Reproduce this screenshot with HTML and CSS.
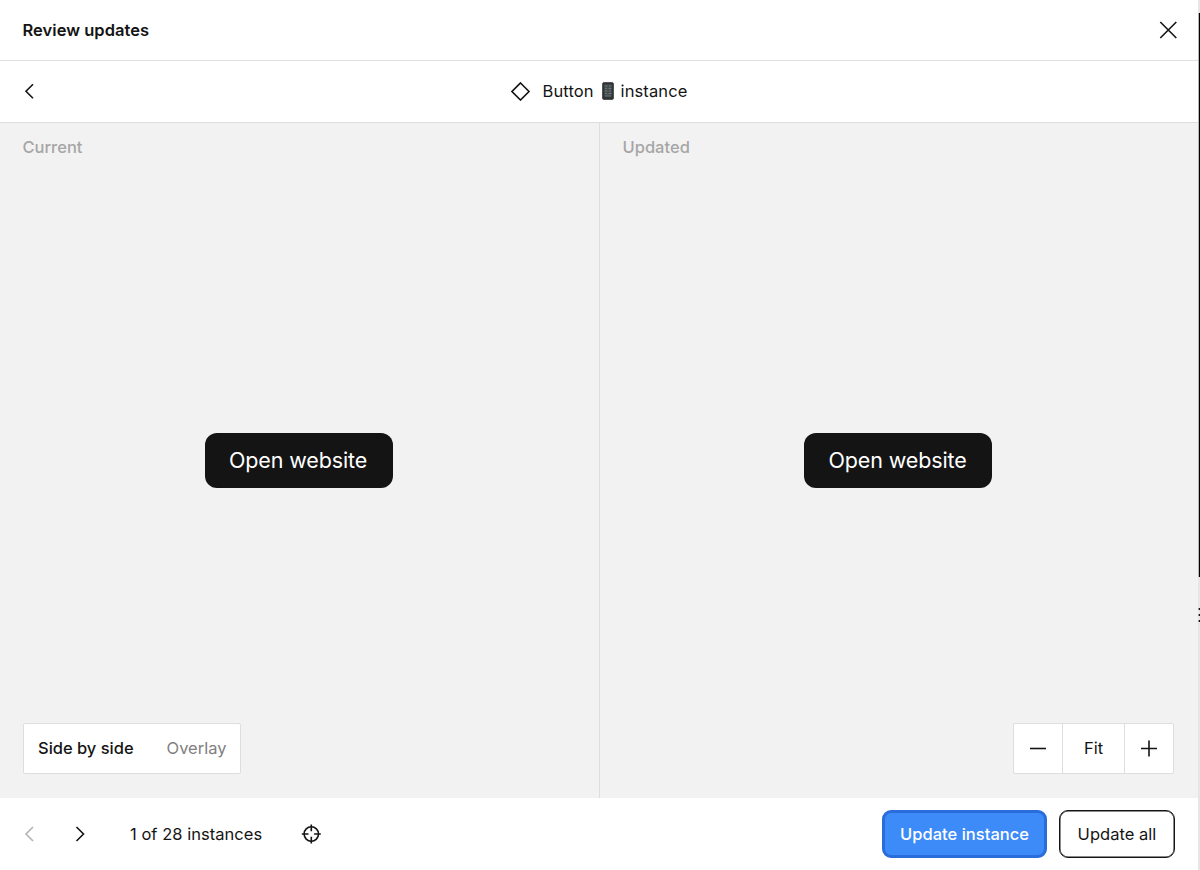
FILE: index.html
```
<!DOCTYPE html>
<html lang="en">
<head>
    <meta charset="UTF-8">
    <meta name="viewport" content="width=device-width, initial-scale=1.0">
    <title>Review updates</title>
    <link rel="stylesheet" href="styles.css">
</head>
<body>
    <div class="dialog">
        <header class="title-bar">
            <h1>Review updates</h1>
            <button class="icon-button" aria-label="Close">
                <svg width="18" height="18" viewBox="0 0 18 18"><path d="M1.3 1l16 16M17.3 1l-16 16"/></svg>
            </button>
        </header>

        <div class="sub-bar">
            <button class="icon-button back" aria-label="Back">
                <svg width="10" height="16" viewBox="0 0 10 16"><path d="M9 1.3l-7 7 7 7"/></svg>
            </button>
            <div class="instance-name">
                <svg class="diamond" width="20" height="20" viewBox="0 0 20 20"><path d="M9.5 2l8.5 8.5L9.5 19 1 10.5z"/></svg>
                <span>Button</span>
                <svg class="phone" width="12" height="18" viewBox="0 0 12 18">
                    <rect x="0.5" y="0.5" width="11" height="17" rx="1.5" fill="#303536"/>
                    <rect x="2" y="2" width="8" height="13" fill="#454c4d"/>
                    <path d="M2.5 4h3M7 4h2.5M3 6.5h2M6.5 6.5h3M2.5 9h3M7 9h2M3 11.5h2M6.5 11.5h3M3 14h6"/>
                </svg>
                <span>instance</span>
            </div>
        </div>

        <main class="compare">
            <section class="pane">
                <h2>Current</h2>
                <div class="preview">Open website</div>
                <div class="view-toggle">
                    <button class="active">Side by side</button>
                    <button>Overlay</button>
                </div>
            </section>
            <section class="pane">
                <h2>Updated</h2>
                <div class="preview">Open website</div>
                <div class="zoom">
                    <button aria-label="Zoom out">
                        <svg width="18" height="18" viewBox="0 0 18 18"><path d="M1 8.5h16"/></svg>
                    </button>
                    <button class="fit">Fit</button>
                    <button aria-label="Zoom in">
                        <svg width="18" height="18" viewBox="0 0 18 18"><path d="M1 8.5h16M9 .5v16"/></svg>
                    </button>
                </div>
            </section>
        </main>

        <footer class="footer">
            <button class="icon-button prev" aria-label="Previous">
                <svg width="10" height="16" viewBox="0 0 10 16"><path d="M9 1L2 8l7 7"/></svg>
            </button>
            <button class="icon-button next" aria-label="Next">
                <svg width="10" height="16" viewBox="0 0 10 16"><path d="M1.5 1l7 7-7 7"/></svg>
            </button>
            <span class="counter">1 of 28 instances</span>
            <button class="icon-button locate" aria-label="Locate">
                <svg width="20" height="20" viewBox="0 0 20 20"><circle cx="10.3" cy="10" r="7.2"/><path d="M10.3 .5v6.7M10.3 12.8v6.7M.8 10h6.7M13.1 10h6.7"/></svg>
            </button>
            <div class="actions">
                <button class="btn btn-primary">Update instance</button>
                <button class="btn btn-outline">Update all</button>
            </div>
        </footer>
    </div>

    <!-- edge of the canvas behind the dialog -->
    <div class="backdrop">
        <div class="canvas"></div>
        <div class="dots"><i></i><i></i><i></i></div>
    </div>
</body>
</html>
```
FILE: styles.css
```
* {
    box-sizing: border-box;
}
body {
    display: flex;
    width: 1200px;
    height: 870px;
    margin: 0;
    overflow: hidden;
    background-color: #fff;
    color: #141414;
    font-family: Inter, sans-serif;
    font-size: 16.5px;
    line-height: 24px;
    letter-spacing: 0.03px;
}
button {
    margin: 0;
    padding: 0;
    border: none;
    background: none;
    color: inherit;
    font: inherit;
    letter-spacing: inherit;
    cursor: pointer;
}
svg {
    display: block;
    fill: none;
    stroke: #141414;
    stroke-width: 1.6;
}
h1,
h2 {
    margin: 0;
    font-size: inherit;
    letter-spacing: 0;
}
.dialog {
    display: flex;
    flex-direction: column;
    width: 1198px;
}
.icon-button {
    flex: none;
}

/* Header */
.title-bar {
    display: flex;
    align-items: center;
    justify-content: space-between;
    height: 61px;
    padding: 0 21px 0 22.5px;
    border-bottom: 1px solid #e0e0e0;
}
.title-bar h1 {
    font-weight: 600;
    letter-spacing: 0.03px;
}
.sub-bar {
    display: grid;
    grid-template-columns: 1fr auto 1fr;
    align-items: center;
    height: 62px;
    padding: 0 24px 1px;
    border-bottom: 1px solid #dedede;
}
.back {
    justify-self: start;
}
.instance-name {
    display: flex;
    align-items: center;
    letter-spacing: 0.1px;
}
.diamond {
    margin-right: 12px;
}
.phone {
    margin: 0 7px 0 8px;
    stroke: #7d8586;
    stroke-width: 0.7;
}
.phone rect {
    stroke: #303536;
}

/* Comparison */
.compare {
    display: grid;
    grid-template-columns: 600px 1fr;
    flex: 1;
    background-color: #f2f2f2;
}
.pane {
    display: flex;
    flex-direction: column;
    justify-content: space-between;
    padding: 12px 24px 24px 23px;
}
.pane:first-child {
    border-right: 1px solid #dedede;
}
.pane h2 {
    margin-left: -0.5px;
    color: #a6a6a6;
    font-weight: 500;
}
.preview {
    align-self: center;
    width: 188px;
    height: 55px;
    margin: 38px 1px 0 0;
    padding-right: 1px;
    border-radius: 12px;
    background-color: #141414;
    color: #fff;
    font-size: 21.5px;
    line-height: 54px;
    letter-spacing: -0.13px;
    text-align: center;
}
.view-toggle,
.zoom {
    display: flex;
    height: 51px;
    border: 1px solid #dedede;
    border-radius: 2px;
    background-color: #fff;
}
.view-toggle {
    align-self: flex-start;
    gap: 33px;
    width: 218px;
    padding: 0 0 1px 14px;
    color: #808080;
    letter-spacing: -0.02px;
}
.view-toggle .active {
    color: #141414;
    font-weight: 500;
}
.zoom {
    align-self: flex-end;
}
.zoom button {
    display: flex;
    align-items: center;
    justify-content: center;
    width: 48px;
}
.zoom .fit {
    width: 63px;
    padding-bottom: 1px;
    border: solid #dedede;
    border-width: 0 1px;
}

/* Footer */
.footer {
    display: flex;
    align-items: center;
    height: 72px;
    padding: 0 23px 0 24px;
}
.prev svg {
    stroke: #b3b3b3;
}
.next {
    margin-left: 41px;
}
.counter {
    margin: 0 39px 0 45px;
}
.actions {
    display: flex;
    gap: 12px;
    margin-left: auto;
}
.btn {
    height: 48px;
    border-radius: 9px;
}
.btn-primary {
    width: 165px;
    border: 3px solid #2b6cdb;
    background-color: #3d8bf8;
    color: #fff;
    font-weight: 500;
}
.btn-outline {
    width: 116px;
    border: 1.5px solid #141414;
    box-shadow: inset 0 0 0 0.5px #141414;
}

/* Backdrop */
.backdrop {
    width: 2px;
    padding-top: 13px;
    background-color: #e6e6e6;
}
.canvas {
    height: 564px;
    border-left: 1px solid #b5b5b5;
    background-color: #000;
}
.dots {
    display: grid;
    gap: 4px;
    padding-top: 31px;
}
.dots i {
    height: 2px;
    border-left: 1px solid #999;
    background-color: #141414;
}
```
